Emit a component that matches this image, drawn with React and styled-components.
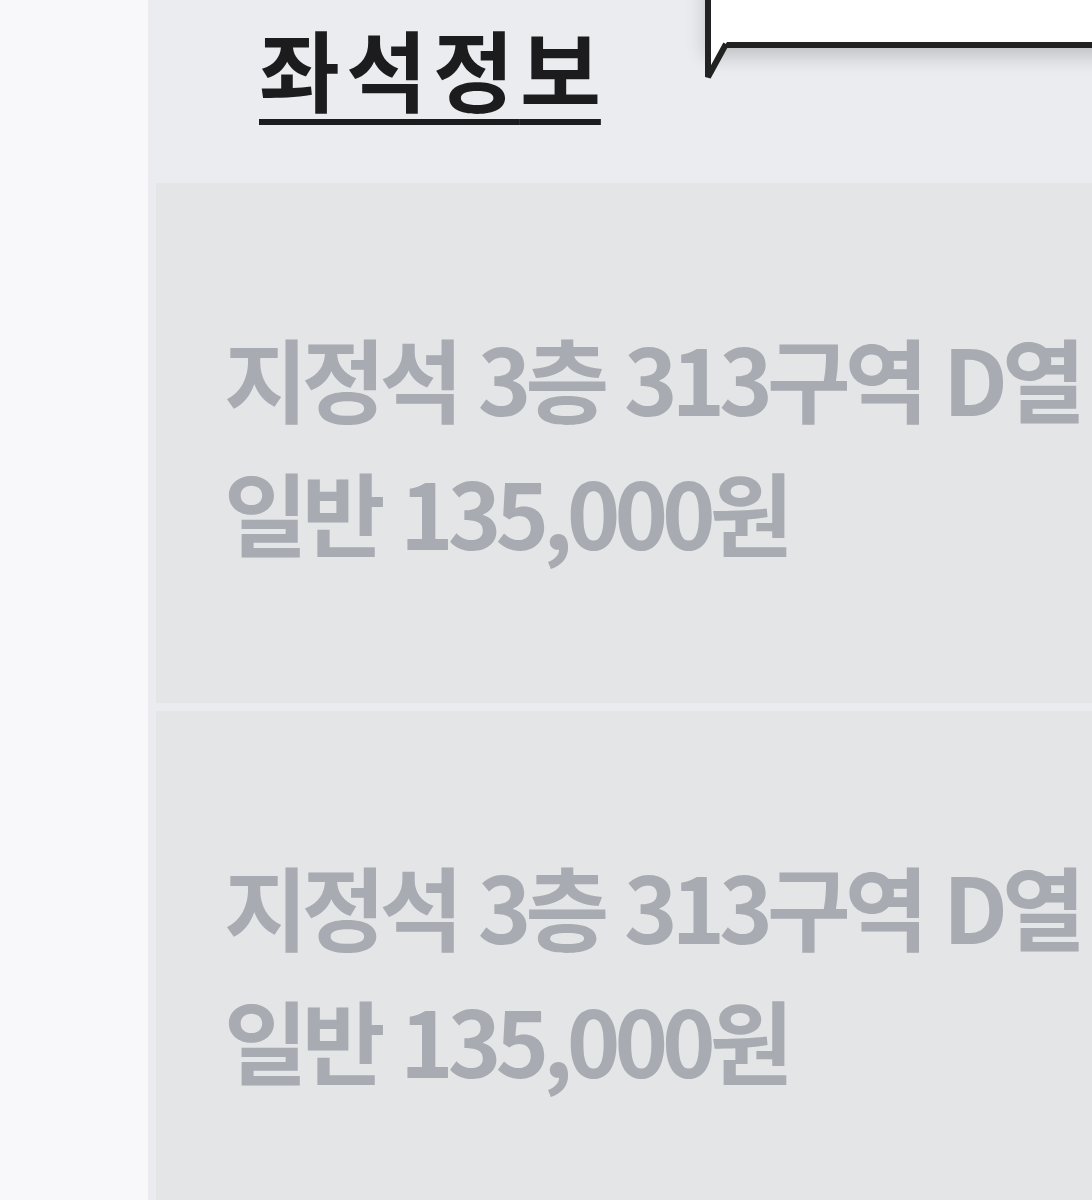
import React from "react";
import styled, { createGlobalStyle } from "styled-components";

const GlobalStyle = createGlobalStyle`
  html, body {
    margin: 0;
    padding: 0;
    background: #f8f8fa;
    overflow: hidden;
  }
  body {
    font-family: "Noto Sans CJK KR", "Noto Sans", sans-serif;
  }
`;

const Page = styled.div`
  display: flex;
  width: 1092px;
  height: 1200px;
  overflow: hidden;
`;

const Sidebar = styled.div`
  width: 148px;
  flex-shrink: 0;
  background: #f8f8fa;
`;

const Panel = styled.div`
  position: relative;
  flex: 1;
  display: flex;
  flex-direction: column;
  gap: 8px;
  padding-left: 8px;
  background: #ebecef;
`;

const Header = styled.div`
  height: 175px;
  flex-shrink: 0;
  padding-left: 103px;
  box-sizing: border-box;
`;

const Title = styled.h2`
  margin: 0;
  padding-top: 14px;
  font-size: 88px;
  font-weight: 700;
  line-height: 1.2;
  letter-spacing: 6px;
  color: #1c1c1e;
  text-decoration: underline;
  text-decoration-thickness: 6px;
  text-underline-offset: 14px;
  display: inline-block;
`;

const LastChar = styled.span`
  letter-spacing: 0;
`;

const Row = styled.div`
  height: ${({ $h }) => $h}px;
  flex-shrink: 0;
  background: #e4e5e7;
  display: flex;
  flex-direction: column;
  justify-content: center;
  padding-left: 68px;
`;

const Line = styled.div`
  font-size: 91px;
  font-weight: 700;
  line-height: 134px;
  letter-spacing: -6px;
  word-spacing: 6px;
  color: #a8acb2;
  white-space: nowrap;
`;

const Bubble = styled.div`
  position: absolute;
  left: 557px;
  top: -64px;
  width: 480px;
  height: 100px;
  background: #fff;
  border: 6px solid #222;
  box-shadow: 0 9px 18px rgba(0, 0, 0, 0.18);
`;

const Tail = styled.svg`
  position: absolute;
  left: -6px;
  top: 100px;
  width: 28px;
  height: 40px;
  overflow: visible;
`;

const seats = [
  { line1: "지정석 3층 313구역 D열", line2: "일반 135,000원", h: 520 },
  { line1: "지정석 3층 313구역 D열", line2: "일반 135,000원", h: 520 },
];

export default function App() {
  return (
    <>
      <GlobalStyle />
      <Page>
        <Sidebar />
        <Panel>
          <Header>
            <Title>
              좌석정<LastChar>보</LastChar>
            </Title>
          </Header>
          {seats.map((s, i) => (
            <Row key={i} $h={s.h}>
              <Line>{s.line1}</Line>
              <Line>{s.line2}</Line>
            </Row>
          ))}
          <Bubble>
            <Tail viewBox="0 0 28 40">
              <path d="M0 0 L0 36 L22 0 Z" fill="#fff" />
              <path d="M3 0 L3 35 L21 2" fill="none" stroke="#222" strokeWidth="6" strokeLinejoin="bevel" />
            </Tail>
          </Bubble>
        </Panel>
      </Page>
    </>
  );
}
